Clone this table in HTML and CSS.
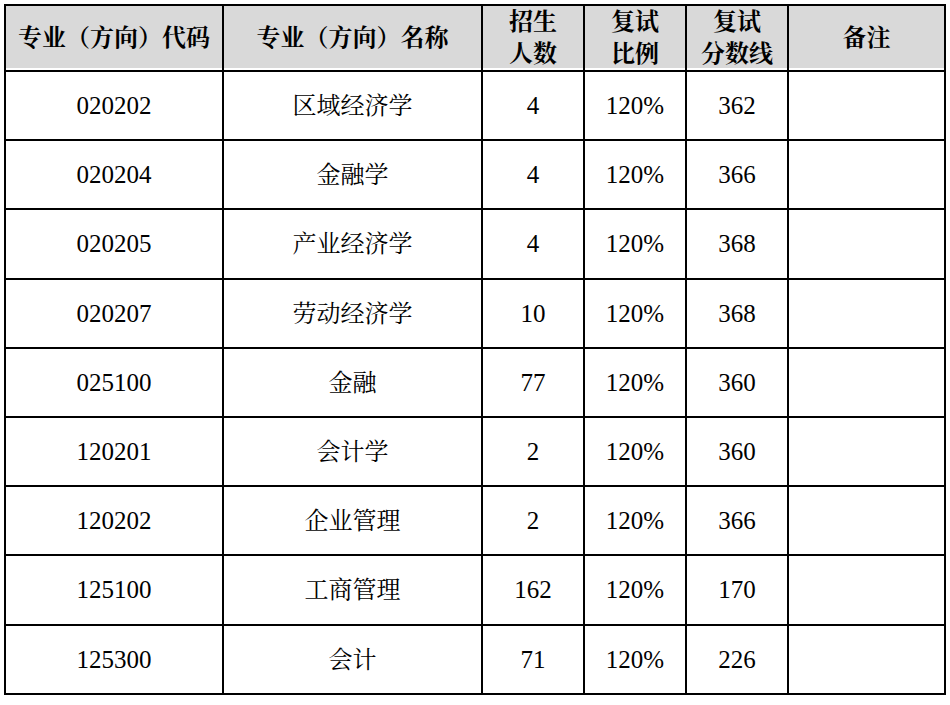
FILE: index.html
```html
<!DOCTYPE html>
<html lang="zh-CN">
<head>
<meta charset="utf-8">
<title>复试分数线</title>
<link rel="stylesheet" href="styles.css">
</head>
<body>
<table class="score-table">
  <colgroup>
    <col class="c-code"><col class="c-name"><col class="c-num"><col class="c-num"><col class="c-num"><col class="c-note">
  </colgroup>
  <thead>
    <tr class="head-row">
      <th>专业（方向）代码</th>
      <th>专业（方向）名称</th>
      <th>招生<br>人数</th>
      <th>复试<br>比例</th>
      <th>复试<br>分数线</th>
      <th>备注</th>
    </tr>
  </thead>
  <tbody>
    <tr><td>020202</td><td class="name">区域经济学</td><td>4</td><td>120%</td><td>362</td><td></td></tr>
    <tr><td>020204</td><td class="name">金融学</td><td>4</td><td>120%</td><td>366</td><td></td></tr>
    <tr class="tall"><td>020205</td><td class="name">产业经济学</td><td>4</td><td>120%</td><td>368</td><td></td></tr>
    <tr><td>020207</td><td class="name">劳动经济学</td><td>10</td><td>120%</td><td>368</td><td></td></tr>
    <tr><td>025100</td><td class="name">金融</td><td>77</td><td>120%</td><td>360</td><td></td></tr>
    <tr><td>120201</td><td class="name">会计学</td><td>2</td><td>120%</td><td>360</td><td></td></tr>
    <tr><td>120202</td><td class="name">企业管理</td><td>2</td><td>120%</td><td>366</td><td></td></tr>
    <tr class="tall"><td>125100</td><td class="name">工商管理</td><td>162</td><td>120%</td><td>170</td><td></td></tr>
    <tr><td>125300</td><td class="name">会计</td><td>71</td><td>120%</td><td>226</td><td></td></tr>
  </tbody>
</table>
</body>
</html>
```
FILE: styles.css
```css
html, body {
  margin: 0;
  padding: 0;
  background: #ffffff;
}

body {
  padding: 4px 0 0 4px;
  font-family: "Liberation Serif", "Noto Serif CJK SC", "Noto Sans CJK SC", serif;
  color: #000000;
}

.score-table {
  border-collapse: collapse;
  table-layout: fixed;
  width: 940px;
}

.c-code { width: 218px; }
.c-name { width: 259px; }
.c-num { width: 102px; }
.c-note { width: 157px; }

.score-table th,
.score-table td {
  border: 2px solid #000000;
  text-align: center;
  vertical-align: middle;
  padding: 0;
}

.score-table th {
  font-size: 24px;
  font-weight: bold;
  line-height: 32px;
  background: linear-gradient(#d9d9d9, #d9d9d9) top left / 100% calc(100% - 2px) no-repeat;
}

.head-row {
  height: 66px;
}

.score-table td {
  font-size: 25px;
  line-height: 28px;
  font-weight: normal;
}

.score-table td.name {
  font-size: 24px;
}

.score-table tbody tr {
  height: 69px;
}

.score-table tbody tr.tall {
  height: 70px;
}
```
